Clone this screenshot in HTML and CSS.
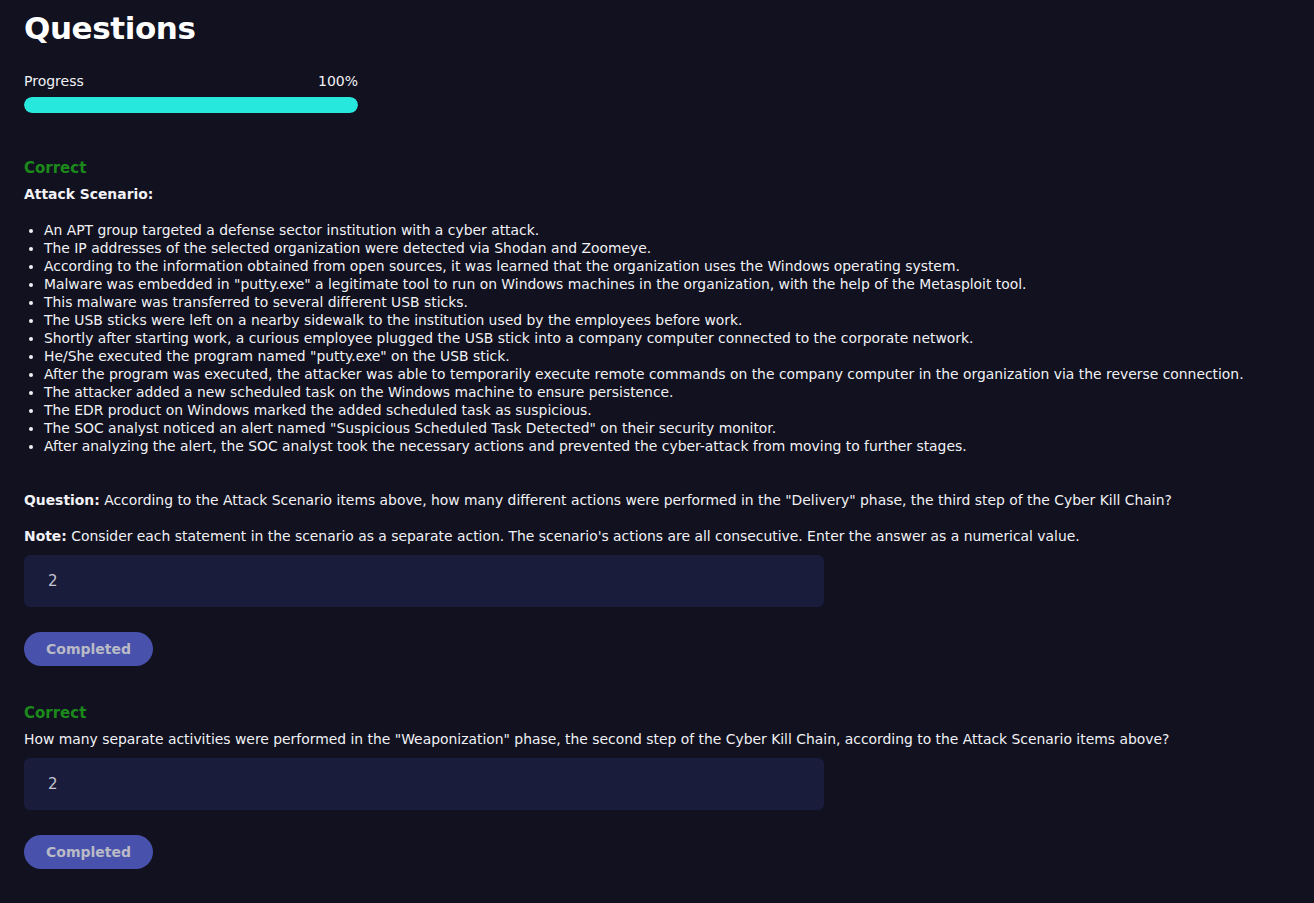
FILE: index.html
```html
<!DOCTYPE html>
<html lang="en">
<head>
<meta charset="utf-8">
<title>Questions</title>
<link rel="stylesheet" href="styles.css">
</head>
<body>
<main class="page">
  <h1 class="title">Questions</h1>
  <section class="progress">
    <div class="progress-head"><span>Progress</span><span>100%</span></div>
    <div class="progress-track"><div class="progress-fill" style="width:100%"></div></div>
  </section>

  <section class="question q1">
    <div class="status">Correct</div>
    <div class="qtext">
      <p class="scenario-title"><strong>Attack Scenario:</strong></p>
      <ul class="scenario">
        <li>An APT group targeted a defense sector institution with a cyber attack.</li>
        <li>The IP addresses of the selected organization were detected via Shodan and Zoomeye.</li>
        <li>According to the information obtained from open sources, it was learned that the organization uses the Windows operating system.</li>
        <li>Malware was embedded in "putty.exe" a legitimate tool to run on Windows machines in the organization, with the help of the Metasploit tool.</li>
        <li>This malware was transferred to several different USB sticks.</li>
        <li>The USB sticks were left on a nearby sidewalk to the institution used by the employees before work.</li>
        <li>Shortly after starting work, a curious employee plugged the USB stick into a company computer connected to the corporate network.</li>
        <li>He/She executed the program named "putty.exe" on the USB stick.</li>
        <li>After the program was executed, the attacker was able to temporarily execute remote commands on the company computer in the organization via the reverse connection.</li>
        <li>The attacker added a new scheduled task on the Windows machine to ensure persistence.</li>
        <li>The EDR product on Windows marked the added scheduled task as suspicious.</li>
        <li>The SOC analyst noticed an alert named "Suspicious Scheduled Task Detected" on their security monitor.</li>
        <li>After analyzing the alert, the SOC analyst took the necessary actions and prevented the cyber-attack from moving to further stages.</li>
      </ul>
      <p class="para"><strong>Question:</strong> According to the Attack Scenario items above, how many different actions were performed in the "Delivery" phase, the third step of the Cyber Kill Chain?</p>
      <p class="para note"><strong>Note:</strong> Consider each statement in the scenario as a separate action. The scenario's actions are all consecutive. Enter the answer as a numerical value.</p>
    </div>
    <div class="answer">2</div>
    <button class="btn" type="button">Completed</button>
  </section>

  <section class="question q2">
    <div class="status">Correct</div>
    <p class="qtext single">How many separate activities were performed in the "Weaponization" phase, the second step of the Cyber Kill Chain, according to the Attack Scenario items above?</p>
    <div class="answer">2</div>
    <button class="btn" type="button">Completed</button>
  </section>
</main>
</body>
</html>
```

FILE: styles.css
```css
* { box-sizing: border-box; }
html, body { margin: 0; padding: 0; }
body {
  background: #11111f;
  color: #f2f2f6;
  font-family: "DejaVu Sans", "Noto Sans", sans-serif;
  width: 1314px;
  height: 903px;
  overflow: hidden;
}
.page {
  padding: 8px 24px 0 24px;
}
.title {
  margin: 0;
  font-size: 31px;
  font-weight: 700;
  line-height: 40px;
  color: #ffffff;
  letter-spacing: -0.4px;
}
.progress {
  width: 334px;
  margin-top: 24px;
}
.progress-head {
  display: flex;
  justify-content: space-between;
  font-size: 14px;
  line-height: 18px;
}
.progress-track {
  margin-top: 7px;
  height: 16px;
  border-radius: 8px;
  background: #2a2a44;
  overflow: hidden;
}
.progress-fill {
  height: 100%;
  background: #27e8dc;
  border-radius: 8px;
}
.question { display: flex; flex-direction: column; align-items: flex-start; }
.q1 { margin-top: 45px; }
.q2 { margin-top: 37px; }
.status {
  color: #1b8a1b;
  font-weight: 700;
  font-size: 15px;
  line-height: 20px;
}
.qtext {
  font-size: 13.9px;
  line-height: 18px;
  margin: 0;
}
.scenario-title { margin: 7px 0 0 0; }
.scenario {
  margin: 18px 0 0 0;
  padding-left: 20px;
}
.scenario li { line-height: 18px; }
.para { margin: 36px 0 0 0; }
.note { margin-top: 18px; }
.single { margin-top: 7px; }
.answer {
  margin-top: 10px;
  width: 800px;
  height: 52px;
  border-radius: 6px;
  background: #1a1c3b;
  color: #c4c4d2;
  font-size: 15px;
  line-height: 52px;
  padding-left: 24px;
}
.btn {
  margin-top: 25px;
  width: 129px;
  height: 34px;
  border: none;
  border-radius: 17px;
  background: #4852ad;
  color: #b9bac6;
  font-family: inherit;
  font-weight: 700;
  font-size: 14px;
  padding: 0;
}
```
